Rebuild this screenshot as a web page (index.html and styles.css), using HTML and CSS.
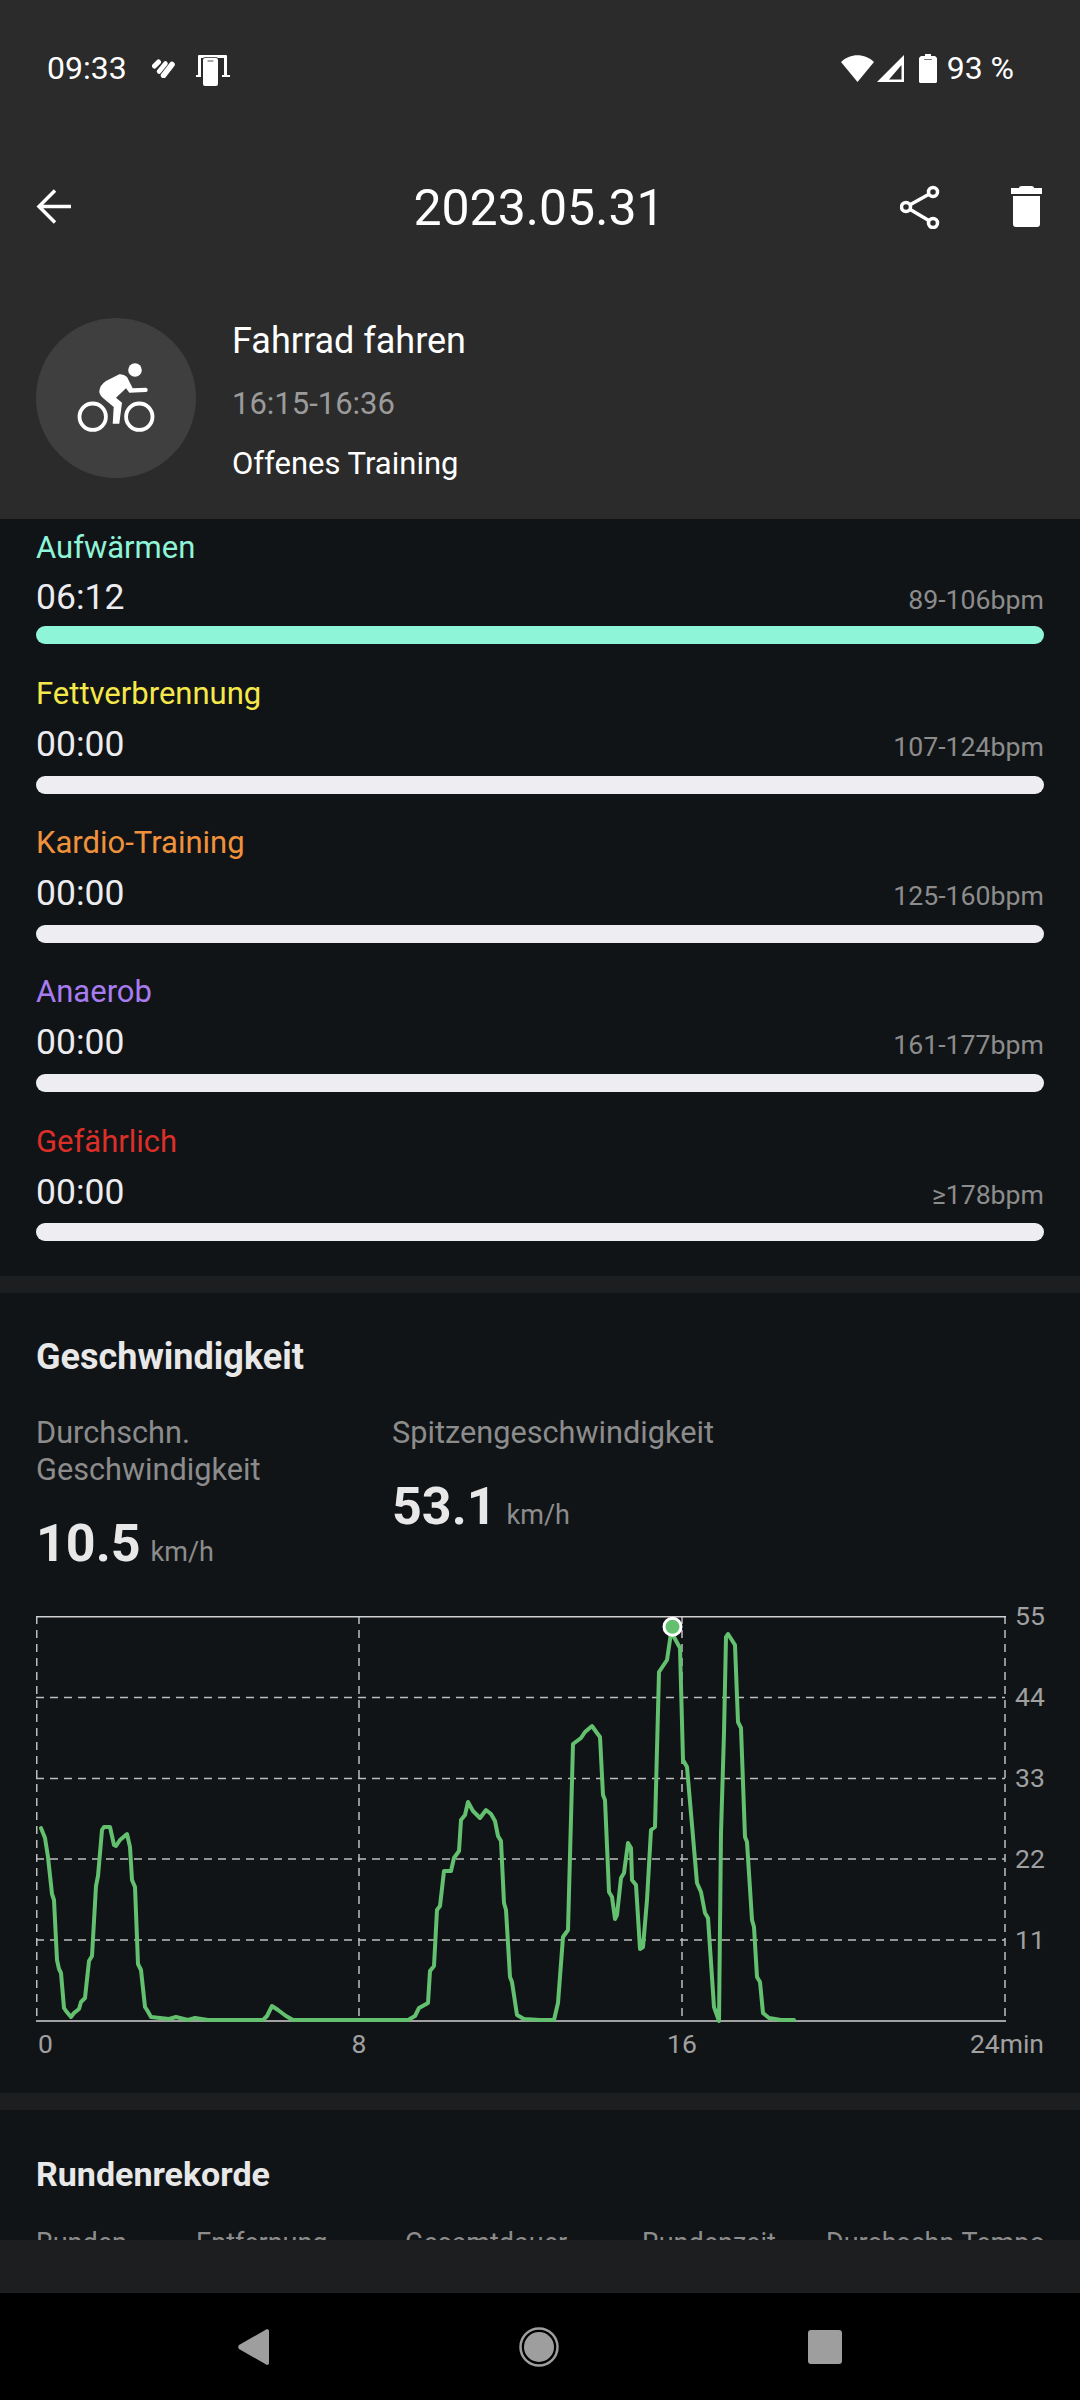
FILE: index.html
```html
<!DOCTYPE html>
<html lang="de">
<head>
<meta charset="utf-8">
<title>2023.05.31</title>
<link rel="stylesheet" href="styles.css">
</head>
<body>
<div class="screen">
  <header class="head">
    <div class="status">
      <span class="clock">09:33</span>
      <svg class="ic-fit" viewBox="0 0 24 19"><g fill="none" stroke="#fff" stroke-linecap="round"><path d="M2.500 7 6.500 3" stroke-width="5"/><path d="M7 12.500 13.500 4.500" stroke-width="4.500"/><path d="M11.500 16.500 20 5.500" stroke-width="5.500"/></g></svg>
      <svg class="ic-dev" viewBox="0 0 34 31"><path d="M3 0h27a1 1 0 0 1 1 1v19h-3V3H5v17H2V1a1 1 0 0 1 1-1zM0 20h5v2H0zM26 20h8v2h-8z" fill="#fff"/><path d="M9 3h11a2 2 0 0 1 2 2v24a2 2 0 0 1-2 2H9a2 2 0 0 1-2-2V5a2 2 0 0 1 2-2z" fill="#fff" stroke="#2b2b2b" stroke-width="1.500" paint-order="stroke"/><path d="M11.500 5.500h6v1h-6z" fill="#555"/></svg>
      <span class="grow"></span>
      <svg class="ic-wifi" viewBox="0 0 33 27"><path d="M0 7C9-2 24-2 33 7L16.500 27z" fill="#fff"/></svg>
      <svg class="ic-sig" viewBox="0 0 27 27"><path d="M27 0V27H0zM24.500 10 12 24.500H24.500z" fill="#fff" fill-rule="evenodd"/></svg>
      <svg class="ic-bat" viewBox="0 0 18 29"><path d="M6 0h6v2h4l2 2v24l-1 1H1l-1-1V4l2-2h4z" fill="#fff"/><path d="M5 5h8v1H5z" fill="#777"/></svg>
      <span class="pct">93 %</span>
    </div>
    <div class="bar">
      <svg class="ic-back" viewBox="0 0 35 35"><path d="M35 17.500H3M19 1.500 3 17.500l16 16" fill="none" stroke="#fff" stroke-width="3.500"/></svg>
      <h1 class="title">2023.05.31</h1>
      <div class="bar-actions">
        <svg class="ic-share" viewBox="0 0 40 44"><g fill="none" stroke="#fff" stroke-width="3.500"><path d="M6 22 33 7M6 22l27 16"/><circle cx="33" cy="7" r="4.500" fill="#2b2b2b"/><circle cx="6" cy="22" r="4.500" fill="#2b2b2b"/><circle cx="33" cy="38" r="4.500" fill="#2b2b2b"/></g></svg>
        <svg class="ic-del" viewBox="0 0 31 41"><path d="M8 2Q8 0 11 0h9q3 0 3 2h8v6H0V2zM2 10h27v28q0 3-3 3H5q-3 0-3-3z" fill="#fff"/></svg>
      </div>
    </div>
    <div class="sport">
      <div class="avatar">
        <svg class="ic-bike" viewBox="0 0 78 70"><g fill="#fff"><circle cx="58" cy="7" r="6.800"/><path d="M42.300 11.300Q47 11 50 14L55.700 25.300 69 24.700Q70.700 25 70.700 26.700 70.700 29 69 29L52.300 29.700 49 25.300 39 34.700 45 39.700 42.300 60.700H35.700L36.700 44 25.700 34.700Q22 31 22.300 28 23 22 29 18z"/></g><g fill="none" stroke="#fff" stroke-width="3.800"><circle cx="15.700" cy="53.700" r="13.200"/><circle cx="62.300" cy="53.700" r="13.200"/></g></svg>
      </div>
      <div class="sport-text">
        <div class="s-name">Fahrrad fahren</div>
        <div class="s-time">16:15-16:36</div>
        <div class="s-mode">Offenes Training</div>
      </div>
    </div>
  </header>

  <main class="scroll">
    <section class="zones">
      <div class="zone">
        <div class="z-label c-warm">Aufwärmen</div>
        <div class="z-row"><span class="z-time">06:12</span><span class="z-bpm">89-106bpm</span></div>
        <div class="z-bar b-warm"></div>
      </div>
      <div class="zone">
        <div class="z-label c-fat">Fettverbrennung</div>
        <div class="z-row"><span class="z-time">00:00</span><span class="z-bpm">107-124bpm</span></div>
        <div class="z-bar"></div>
      </div>
      <div class="zone">
        <div class="z-label c-cardio">Kardio-Training</div>
        <div class="z-row"><span class="z-time">00:00</span><span class="z-bpm">125-160bpm</span></div>
        <div class="z-bar"></div>
      </div>
      <div class="zone">
        <div class="z-label c-ana">Anaerob</div>
        <div class="z-row"><span class="z-time">00:00</span><span class="z-bpm">161-177bpm</span></div>
        <div class="z-bar"></div>
      </div>
      <div class="zone">
        <div class="z-label c-dang">Gefährlich</div>
        <div class="z-row"><span class="z-time">00:00</span><span class="z-bpm">≥178bpm</span></div>
        <div class="z-bar"></div>
      </div>
    </section>

    <section class="speed">
      <h2 class="sec-title sec-title-lg">Geschwindigkeit</h2>
      <div class="stats">
        <div class="stat stat-a">
          <div class="stat-label">Durchschn.<br>Geschwindigkeit</div>
          <div class="stat-val">10.5<span class="unit">km/h</span></div>
        </div>
        <div class="stat">
          <div class="stat-label">Spitzengeschwindigkeit</div>
          <div class="stat-val">53.1<span class="unit">km/h</span></div>
        </div>
      </div>
      <div class="chart">
        <svg class="plot" viewBox="0 0 970 406">
          <g fill="none" stroke="#bdbdbd" stroke-width="1.500" stroke-dasharray="8 6">
            <path d="M0 81.500H969M0 162.500H969M0 243H969M0 324H969"/>
            <path d="M.75 0V405M323 0V405M646 0V405M969 0V405"/>
          </g>
          <path d="M0 .75H970M0 405H970" fill="none" stroke="#d0d0d0" stroke-width="1.500"/>
          <polyline class="line" points="5,212 9,222 12,241 16,278 18,284 21,344 23,353 25,357 28,392 30,395 35,401 38,397 43,393 45,386 49,382 53,345 56,340 60,270 62,260 66,214 68,211 74,211 78,229 80,230 84,224 91,218 94,231 96,264 99,271 102,348 105,354 109,391 111,394 115,401 133,403 140,401 152,404 159,402 172,404 227,404 231,400 236,390 242,394 250,400 257,404 372,404 379,400 383,392 392,387 394,355 398,350 401,294 404,290 408,255 415,255 418,242 423,235 425,204 429,199 432,186 437,195 444,202 450,194 455,198 459,205 462,220 465,225 468,287 470,294 474,361 476,366 481,399 488,403 504,404 518,404 522,387 527,321 532,314 537,128 545,122 549,116 556,110 561,117 564,121 567,179 569,184 573,276 576,281 579,303 581,299 585,262 588,257 592,227 595,232 596,264 600,269 604,333 607,331 611,284 615,214 619,211 623,56 631,44 635,17 638,21 644,32 647,144 651,151 661,267 665,276 669,297 672,302 678,391 683,405 685,217 688,117 690,21 692,18 699,29 702,106 705,112 709,221 711,226 716,304 718,311 721,361 724,366 727,397 733,402 745,404 758,404"/>
          <circle class="dot" cx="636.500" cy="10.700" r="8.500"/>
        </svg>
        <div class="ylabels"><span>55</span><span>44</span><span>33</span><span>22</span><span>11</span></div>
      </div>
      <div class="xlabels"><span>0</span><span>8</span><span>16</span><span>24min</span></div>
    </section>

    <section class="laps">
      <h2 class="sec-title">Rundenrekorde</h2>
      <div class="lap-head"><span>Runden</span><span>Entfernung</span><span>Gesamtdauer</span><span>Rundenzeit</span><span>Durchschn.Tempo</span></div>
    </section>
  </main>

  <div class="foot"></div>
  <nav class="nav">
    <svg class="n-back" viewBox="0 0 31 36"><path d="M29 0c1 0 2 1 2 2v32c0 1-1 2-2 2L1 20c-1-1-1-3 0-4z" fill="#9e9e9e"/></svg>
    <svg class="n-home" viewBox="0 0 40 40"><circle cx="20" cy="20" r="18.500" fill="none" stroke="#9e9e9e" stroke-width="2.500"/><circle cx="20" cy="20" r="15" fill="#9e9e9e"/></svg>
    <div class="n-rec"></div>
  </nav>
</div>
</body>
</html>
```
FILE: styles.css
```css
* { box-sizing: border-box; margin: 0; padding: 0; }
html, body { background: #000; }
body { font-family: Roboto, "Noto Sans", sans-serif; width: 1080px; height: 2400px; overflow: hidden; }
.screen { width: 1080px; height: 2400px; display: flex; flex-direction: column; background: #000; }

.head { height: 519px; background: #2b2b2b; color: #fff; flex: none; }
.status { height: 136px; display: flex; align-items: center; padding: 0 66px 0 47px; }
.clock { font-size: 32px; width: 105px; }
.ic-fit { width: 24px; height: 19px; margin-right: 20px; }
.ic-dev { width: 34px; height: 31px; margin-top: 5px; }
.grow { flex: 1; }
.ic-wifi { width: 33px; height: 27px; margin-right: 3px; }
.ic-sig { width: 27px; height: 27px; margin-right: 15px; }
.ic-bat { width: 18px; height: 29px; margin-right: 10px; }
.pct { font-size: 32px; }

.bar { height: 144px; display: grid; grid-template-columns: 1fr auto 1fr; align-items: center; padding: 0 38px 0 36px; }
.bar svg { margin-bottom: 3px; }
.ic-back { width: 35px; height: 35px; }
.title { font-weight: 400; font-size: 50px; text-align: center; color: #fff; }
.bar-actions { display: flex; justify-content: flex-end; align-items: center; }
.ic-share { width: 40px; height: 44px; margin-right: 71px; }
.ic-del { width: 31px; height: 41px; }

.sport { display: flex; padding: 38px 0 0 36px; }
.avatar { width: 160px; height: 160px; border-radius: 50%; background: #3f3f3f; display: flex; align-items: center; justify-content: center; flex: none; }
.ic-bike { width: 78px; height: 70px; }
.sport-text { margin-left: 36px; }
.s-name { font-size: 36px; line-height: 40px; margin-top: 3px; }
.s-time { font-size: 31px; line-height: 36px; color: #9b9b9b; margin-top: 25px; }
.s-mode { font-size: 31px; line-height: 36px; margin-top: 23.500px; }

.scroll { height: 1721px; background: #1c1e20; overflow: hidden; flex: none; }
.zones { background: #111417; padding: 4px 36px 0; height: 757px; }
.zone { height: 149.200px; }
.zone:first-child { height: 146.500px; }
.zone:first-child .z-label { margin-top: 6.500px; }
.zone:first-child .z-row { margin-top: 10.500px; }
.zone:first-child .z-bar { margin-top: 7.500px; }
.z-label { font-size: 31px; line-height: 36px; }
.c-warm { color: #8ef5d8; }
.c-fat { color: #f5e84a; }
.c-cardio { color: #f0923c; }
.c-ana { color: #a87cf0; }
.c-dang { color: #dc2f28; }
.z-row { display: flex; justify-content: space-between; align-items: flex-end; margin-top: 11px; height: 42px; }
.z-time { font-size: 35.500px; line-height: 42px; color: #ececf0; }
.z-bpm { font-size: 26.700px; line-height: 36px; color: #8c8c8c; }
.z-bar { height: 18px; border-radius: 9px; background: #eeeef2; margin-top: 10.500px; }
.b-warm { background: #8ef5d8; }

.speed { background: #111417; margin-top: 17px; height: 800px; padding: 44px 36px 0; }
.sec-title { font-size: 34px; line-height: 40px; font-weight: 700; color: #e8e8e8; }
.sec-title-lg { font-size: 36px; }
.stats { display: flex; margin-top: 37px; height: 202px; }
.stat-a { width: 356px; }
.stat-label { font-size: 30.700px; line-height: 37px; color: #8c8c8c; }
.stat-val { font-size: 52px; line-height: 58px; font-weight: 700; color: #e8e8e8; margin-top: 27.300px; }
.unit { font-size: 27px; font-weight: 400; color: #8c8c8c; margin-left: 10px; }
.chart { display: flex; }
.plot { width: 970px; height: 406px; display: block; overflow: visible; flex: none; }
.line { fill: none; stroke: #63c06f; stroke-width: 4; stroke-linejoin: round; stroke-linecap: round; }
.dot { fill: #63c06f; stroke: #fff; stroke-width: 3; }
.ylabels { display: flex; flex-direction: column; justify-content: space-between; margin: -16px 0 0 9px; height: 356px; font-size: 26.500px; line-height: 32px; color: #a0a0a0; }
.xlabels { display: grid; grid-template-columns: 161.500px 323px 323px 1fr; font-size: 26.500px; line-height: 32px; color: #a0a0a0; margin-top: 6px; }
.xlabels span:nth-child(1) { padding-left: 2px; }
.xlabels span:nth-child(2), .xlabels span:nth-child(3) { text-align: center; }
.xlabels span:nth-child(4) { text-align: right; }

.laps { background: #111417; margin-top: 17px; height: 130px; padding: 43.500px 36px 0; }
.lap-head { display: grid; grid-template-columns: 160px 209px 237px 184px 1fr; margin-top: 31.500px; font-size: 27px; line-height: 36px; color: #8c8c8c; white-space: nowrap; }

.foot { height: 53px; background: #1c1e20; flex: none; }
.nav { height: 107px; background: #000; flex: none; display: flex; align-items: center; padding: 0 238px; justify-content: space-between; }
.n-back { width: 31px; height: 36px; }
.n-home { width: 40px; height: 40px; }
.n-rec { width: 34px; height: 34px; border-radius: 3px; background: #9e9e9e; }
```
